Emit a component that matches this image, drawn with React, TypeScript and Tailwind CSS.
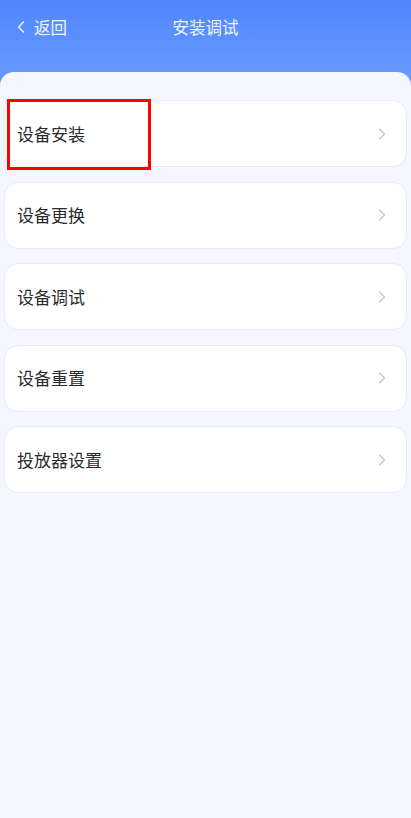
import { ChevronLeft, ChevronRight } from "lucide-react";

const items = ["设备安装", "设备更换", "设备调试", "设备重置", "投放器设置"];

export default function App() {
  return (
    <div
      className="min-h-[818px] w-full bg-[#f4f7ff] flex flex-col"
      style={{ fontFamily: '"Noto Sans CJK SC", "Noto Sans", sans-serif' }}
    >
      {/* 顶部导航 */}
      <div className="h-[92px] bg-gradient-to-b from-[#4f85fd] to-[#6c9eff] relative">
        <div className="h-[54px] flex items-center relative">
          <button className="flex items-center pl-[11px] text-white/90">
            <ChevronLeft className="w-[20px] h-[20px]" strokeWidth={1.8} />
            <span className="ml-[3px] text-[16.5px] leading-none">返回</span>
          </button>
          <span className="absolute left-1/2 -translate-x-1/2 text-white/90 text-[16.5px] leading-none">
            安装调试
          </span>
        </div>
      </div>

      {/* 内容 */}
      <div className="-mt-[20px] flex-1 bg-[#f4f7ff] rounded-t-[14px] relative px-[4px] pt-[28px]">
        <div className="flex flex-col gap-[14.5px]">
          {items.map((item, i) => (
            <div
              key={item}
              className="relative h-[67px] bg-white rounded-[14px] border border-[#e6ebf5] flex items-center justify-between pl-[12px] pr-[14px]"
            >
              <span className="text-[17px] text-[#2a2a2a]">{item}</span>
              <ChevronRight className="w-[20px] h-[20px] text-[#c4c4c4]" strokeWidth={1.3} />
              {i === 0 && (
                <div className="absolute left-[2px] -top-[2px] w-[144px] h-[71px] border-[3px] border-[#ff0000]" />
              )}
            </div>
          ))}
        </div>
      </div>
    </div>
  );
}
